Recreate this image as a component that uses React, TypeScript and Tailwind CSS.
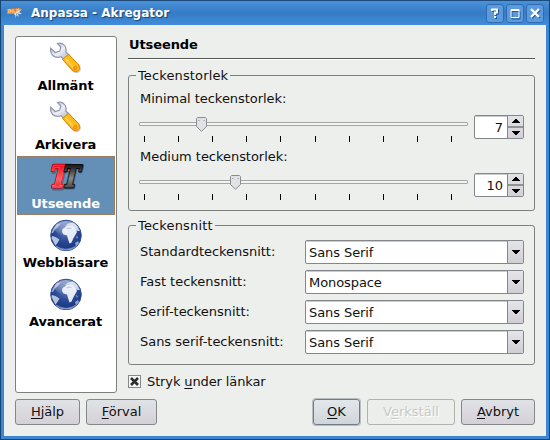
import React from "react";

function Wrench() {
  return (
    <svg width="32" height="32" viewBox="0 0 32 32" className="block">
      <defs>
        <linearGradient id="steel" x1="0" y1="0" x2="1" y2="1">
          <stop offset="0" stopColor="#b4b8cc" />
          <stop offset="0.5" stopColor="#eceef7" />
          <stop offset="1" stopColor="#a9adc4" />
        </linearGradient>
        <linearGradient id="grip" x1="0" y1="1" x2="1" y2="0">
          <stop offset="0" stopColor="#f08a00" />
          <stop offset="0.5" stopColor="#ffc21c" />
          <stop offset="1" stopColor="#f59a00" />
        </linearGradient>
      </defs>
      <path d="M14 18L20 13.500L30 24Q32 28 29 30.500Q26 32 23 30Z" fill="#000" opacity="0.2" />
      <path
        d="M7.500 1.500Q12 0 15 4Q16.600 6.500 15.800 10L19.500 13.500L14.500 18L11 14.700Q6 16.500 2.500 13.300Q0 10.500 0.700 6.300L5.200 10.500L9.800 9.100L10.800 5Z"
        fill="url(#steel)"
        stroke="#9196ae"
        strokeWidth="1.200"
      />
      <path d="M12.500 17.500L18.500 12.300L28.800 23Q31 26.500 28.500 28.700Q25 31 22 28Z" fill="url(#grip)" stroke="#dc8500" strokeWidth="1" />
      <path d="M15.500 17L24 26.500" stroke="#ffdc69" strokeWidth="1.500" opacity="0.8" />
      <circle cx="25.300" cy="26" r="1.700" fill="#ffa514" stroke="#ed8500" />
    </svg>
  );
}

function FontsIcon() {
  return (
    <svg width="32" height="32" viewBox="0 0 32 32" className="block overflow-visible">
      <defs>
        <linearGradient id="redT" x1="0" y1="0" x2="0" y2="1">
          <stop offset="0.2" stopColor="#f01020" />
          <stop offset="0.55" stopColor="#ff5a62" />
          <stop offset="1" stopColor="#e20013" />
        </linearGradient>
        <linearGradient id="darkT" x1="0" y1="0" x2="0" y2="1">
          <stop offset="0.2" stopColor="#222" />
          <stop offset="0.55" stopColor="#8a8a8a" />
          <stop offset="1" stopColor="#222" />
        </linearGradient>
      </defs>
      <g fontFamily="'DejaVu Serif', serif" fontWeight="700" fontSize="30" strokeLinejoin="round">
        <g transform="translate(-2 27) skewX(-13) scale(.82 1)">
          <text x="1.500" y="1.500" fill="#152638" stroke="#152638" strokeWidth="3" opacity="0.35">T</text>
          <text fill="#c80010" stroke="#c80010" strokeWidth="3">T</text>
          <text fill="url(#redT)" stroke="url(#redT)" strokeWidth="1.400">T</text>
          <text fill="none" stroke="#ff9a9f" strokeWidth=".35">T</text>
        </g>
        <g transform="translate(10.500 27) skewX(-13) scale(.76 .98)">
          <text x="1.500" y="1.500" fill="#152638" stroke="#152638" strokeWidth="3" opacity="0.35">T</text>
          <text fill="#0a0a0a" stroke="#0a0a0a" strokeWidth="3">T</text>
          <text fill="url(#darkT)" stroke="url(#darkT)" strokeWidth=".8">T</text>
        </g>
      </g>
    </svg>
  );
}

function Globe() {
  return (
    <svg width="32" height="32" viewBox="0 0 32 32" className="block">
      <defs>
        <radialGradient id="sea" cx="0.5" cy="0.32" r="0.68">
          <stop offset="0" stopColor="#6581bd" />
          <stop offset="0.55" stopColor="#2b4a93" />
          <stop offset="0.85" stopColor="#1e3a85" />
          <stop offset="1" stopColor="#6f86bd" />
        </radialGradient>
        <linearGradient id="gloss" x1="0" y1="0" x2="0" y2="1">
          <stop offset="0" stopColor="#fff" stopOpacity="0.5" />
          <stop offset="1" stopColor="#fff" stopOpacity="0.03" />
        </linearGradient>
      </defs>
      <circle cx="16" cy="16.500" r="15.300" fill="url(#sea)" stroke="#31508f" strokeWidth="1" />
      <path d="M12.500 10L15 8.500L17 6.500L22 6L25 8L27 13L25 16.500L23.500 19L21.500 23.500L19.500 24.500L18 20L17 16.500L13.500 15.500L12 13Z" fill="#e6ebf6" />
      <path d="M15 7L18 4.500L23 3.500L27.500 7L30 12L27 12L24 7.500L20 6Z" fill="#c3cee6" />
      <path d="M16 9L21 8.500L22 9.500L17.500 10.200Z" fill="#a6b5d6" />
      <path d="M2 17L5.500 18L9.500 20.500L7.500 24L5.500 26.500L3.500 23L1.500 19Z" fill="#b6c3df" />
      <path d="M3 10L6.500 5.500L11 4L8 8L5 10.500L3 14L1.500 14Z" fill="#9cacd2" />
      <path d="M25 24L28 22L29 24L26 27.500Z M26 17L28 18L27 20Z" fill="#8da3d0" />
      <ellipse cx="16" cy="9" rx="11.500" ry="7" fill="url(#gloss)" />
      <path d="M6 27.500Q16 34 26 27.500" fill="none" stroke="#8fa4d2" strokeWidth="1.200" opacity="0.8" />
    </svg>
  );
}

function AppIcon() {
  return (
    <svg width="16" height="16" viewBox="0 0 16 16" className="block">
      <path d="M0 4L14 3L12 6L9 9L0 9Z" fill="#f08223" />
      <path d="M1 5L4 5L4 7L1 7M5 5L7 5M5 7L8 7M9 5L12 4" stroke="#ffd9a8" fill="none" />
      <path d="M7 9L10 6L15 4L12 7L15 9L11 9L12 12L10 10L8 13L8 10Z" fill="#e9e5df" />
      <path d="M9 9L12 8M8 12L10 9" stroke="#8c8780" strokeWidth=".7" />
    </svg>
  );
}

function TitleButton({ children }: { children: React.ReactNode }) {
  return (
    <div className="flex h-[19px] w-[18px] items-center justify-center rounded-[3px] border border-[#326cae] bg-[#5b9ade]">
      <svg width="16" height="17" viewBox="0 0 16 17" fill="none" className="block">
        {children}
      </svg>
    </div>
  );
}

const pages = [
  { name: "Allmänt", icon: <Wrench /> },
  { name: "Arkivera", icon: <Wrench /> },
  { name: "Utseende", icon: <FontsIcon />, selected: true },
  { name: "Webbläsare", icon: <Globe /> },
  { name: "Avancerat", icon: <Globe /> },
];

function Arrow({ up = false }: { up?: boolean }) {
  return (
    <svg width="8" height="4" viewBox="0 0 8 4" shapeRendering="crispEdges" className="block">
      <path d={up ? "M3 0h2v1h1v1h1v1h1v1H0V3h1V2h1V1h1z" : "M0 0h8v1H7v1H6v1H5v1H3V3H2V2H1V1H0z"} fill="#000" />
    </svg>
  );
}

function SizeRow({ label, value, handle }: { label: string; value: number; handle: number }) {
  return (
    <div className="h-[58px]">
      <div className="h-[15px] pl-px tracking-[-0.04px]">{label}</div>
      <div className="mt-[9px] flex gap-[6px]">
        <div className="relative h-6 w-[329px] pt-[7px]">
          <div className="h-1 rounded-[1px] border border-[#a3a6a3] bg-[#f3f5f2]" />
          <div className="mt-[10px] ml-[5px] flex w-[308px] justify-between">
            {Array.from({ length: 10 }, (_, i) => (
              <i key={i} className="h-[6px] w-px bg-black" />
            ))}
          </div>
          <svg width="11" height="15" viewBox="0 0 11 15" className="absolute top-[2px]" style={{ left: handle }}>
            <path d="M1.500 .5H9.500L10.500 1.500V9.500L5.500 14.300L.5 9.500V1.500Z" fill="#e2e1e5" stroke="#8a8d92" />
            <path d="M2 3.500h1.500M7.500 3.500H9" stroke="#aaa9b0" />
          </svg>
        </div>
        <div className="flex h-6 w-[50px] overflow-hidden rounded-[2px] border border-[#83878b] bg-white">
          <div className="flex-1 border-t border-[#c9cbcc] pt-[3px] pr-1 text-right">{value}</div>
          <div className="flex w-4 flex-col border-l border-[#83878b] bg-linear-to-b from-[#e3e3e7] to-[#d3d0d7]">
            <div className="flex flex-1 items-center justify-center">
              <Arrow up />
            </div>
            <div className="h-[2px] bg-[#8f9297]" />
            <div className="flex flex-1 items-center justify-center">
              <Arrow />
            </div>
          </div>
        </div>
      </div>
    </div>
  );
}

function FontRow({ label, font }: { label: string; font: string }) {
  return (
    <div className="flex h-6">
      <div className="w-[165px] pt-[4px] tracking-[-0.03px]">{label}</div>
      <div className="flex w-[219px] overflow-hidden rounded-[2px] border border-[#83878b] bg-white">
        <div className="flex-1 border-t border-[#c9cbcc] pt-[3px] pl-[3px] tracking-[-0.08px]">{font}</div>
        <div className="flex w-4 items-center justify-center border-l border-[#83878b] bg-linear-to-b from-[#e5e5e9] to-[#d0cdd3]">
          <Arrow />
        </div>
      </div>
    </div>
  );
}

function Button({ children, className }: { children: React.ReactNode; className: string }) {
  return (
    <button className={`flex h-[26px] justify-center rounded-[3px] border pt-[4px] ${className}`}>
      <span>{children}</span>
    </button>
  );
}

function Key({ children }: { children: string }) {
  return <span className="underline decoration-1 underline-offset-2">{children}</span>;
}

const plain = "border-[#85888b] bg-linear-to-b from-[#dfe3e6] to-[#d5d0d7]";

export default function App() {
  return (
    <div className="flex h-[440px] w-[550px] flex-col overflow-hidden border-x border-b border-[#164475] bg-[#3d87d2] font-['DejaVu_Sans',sans-serif] text-[13px] leading-[15px] text-[#111]">
      <header className="flex h-[25px] shrink-0 items-start border-t border-[#1d4b7c] bg-linear-to-b from-[#4991d9] via-[#367cc5] to-[#408cdb] pr-[5px] pl-[6px]">
        <div className="pt-[4px]">
          <AppIcon />
        </div>
        <h1 className="flex-1 pt-[5px] pl-2 text-[12px] font-bold text-white [text-shadow:1px_1px_1px_#174273]">Anpassa - Akregator</h1>
        <div className="flex gap-[2px] pt-[3px]">
          <TitleButton>
            <path d="M5 6V4.500H10V7.500H8V10M8 11V13" stroke="#25558a" strokeWidth="2" transform="translate(1 1)" />
            <path d="M5 6V4.500H10V7.500H8V10M8 11V13" stroke="#fff" strokeWidth="2" />
          </TitleButton>
          <TitleButton>
            <path d="M5 6.500H13V14H5Z" stroke="#28588d" />
            <path d="M4 4.500H12V12.500H4ZM4 5.500H12" stroke="#fff" />
          </TitleButton>
          <TitleButton>
            <path d="M5 5L13 13M13 5L5 13" stroke="#28588d" strokeWidth="2" />
            <path d="M4 4L12 12M12 4L4 12" stroke="#fff" strokeWidth="2.400" />
          </TitleButton>
        </div>
      </header>

      <main className="mx-[3px] mb-[3px] flex min-h-0 flex-1 flex-col bg-[#edefec] pl-[11px]">
        <div className="flex h-[374px] gap-[11px]">
          <nav className="mt-[11px] h-[357px] w-[102px] shrink-0 rounded-[3px] border border-[#7d807e] bg-white p-px">
            {pages.map((p) => (
              <div
                key={p.name}
                className={`flex h-[59px] flex-col items-center border pt-[3px] font-bold ${
                  p.selected ? "border-dotted border-[#9c785d] bg-[#648fb6] text-white" : "border-transparent text-black"
                }`}
              >
                {p.icon}
                <div className="mt-[4px] pr-px tracking-[-0.1px]">{p.name}</div>
              </div>
            ))}
          </nav>

          <section className="w-[407px] pt-[12px]">
            <h2 className="h-[22px] border-b border-[#555856] pl-px text-[13px] font-bold tracking-[-0.1px] text-black shadow-[0_1px_0_#fff]">Utseende</h2>
            <fieldset className="mt-[9px] h-[143px] rounded-[3px] border border-[#7d807e] pl-[10px]">
              <legend className="-ml-[3px] h-[15px] px-[2px] tracking-[0.13px]">Teckenstorlek</legend>
              <div className="pt-2">
                <SizeRow label="Minimal teckenstorlek:" value={7} handle={57} />
                <SizeRow label="Medium teckenstorlek:" value={10} handle={91} />
              </div>
            </fieldset>
            <fieldset className="mt-[7px] h-[147px] rounded-[3px] border border-[#7d807e] pl-[11px]">
              <legend className="-ml-[4px] h-[15px] px-[2px] tracking-[0.15px]">Teckensnitt</legend>
              <div className="flex flex-col gap-[6px] pt-[7px]">
                <FontRow label="Standardteckensnitt:" font="Sans Serif" />
                <FontRow label="Fast teckensnitt:" font="Monospace" />
                <FontRow label="Serif-teckensnitt:" font="Sans Serif" />
                <FontRow label="Sans serif-teckensnitt:" font="Sans Serif" />
              </div>
            </fieldset>
            <label className="mt-[9px] flex items-center gap-[6px]">
              <span className="flex h-[13px] w-[13px] items-center justify-center border border-[#85888b] bg-[#f6f7f6]">
                <svg width="9" height="9" viewBox="0 0 9 9" className="block">
                  <path d="M1 1L8 8M8 1L1 8" stroke="#2b302c" strokeWidth="2.600" />
                </svg>
              </span>
              <span className="tracking-[-0.12px]">
                Stryk <Key>u</Key>nder länkar
              </span>
            </label>
          </section>
        </div>

        <footer className="flex">
          <Button className={`w-[65px] ${plain}`}><Key>H</Key>jälp</Button>
          <Button className={`ml-[6px] w-[71px] ${plain}`}><Key>F</Key>örval</Button>
          <Button className="ml-[156px] w-[47px] border-[#6f7c86] bg-linear-to-b from-[#e2e7eb] to-[#cfd6da] shadow-[0_0_0_1px_#b7bdc1]"><Key>O</Key>K</Button>
          <Button className="ml-[7px] w-[88px] border-[#b0b2b0] bg-[#eceeeb] text-[#c7cac7] [text-shadow:1px_1px_0_#fff]">V<Key>e</Key>rkställ</Button>
          <Button className={`ml-[6px] w-[74px] ${plain}`}><Key>A</Key>vbryt</Button>
        </footer>
      </main>
    </div>
  );
}
